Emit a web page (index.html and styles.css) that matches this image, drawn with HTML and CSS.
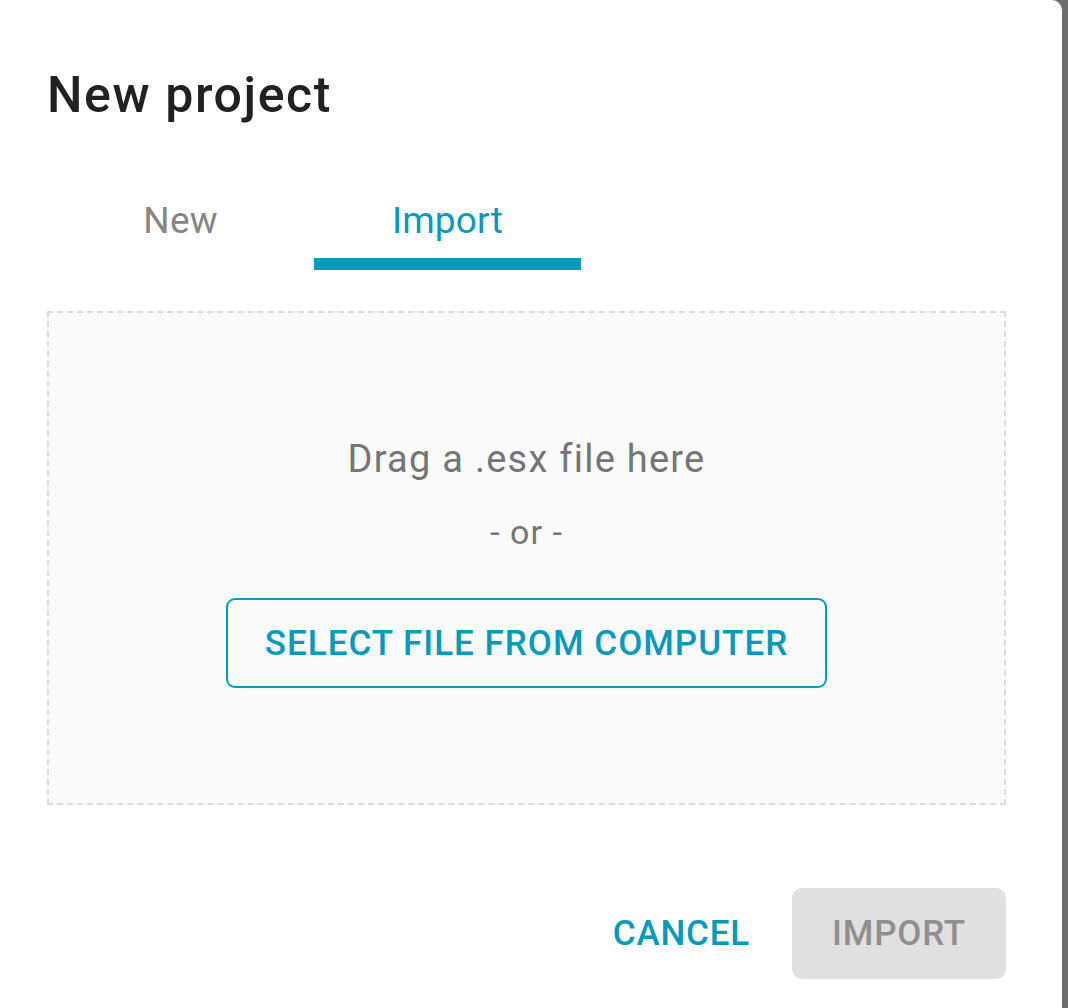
FILE: index.html
```html
<!DOCTYPE html>
<html lang="en">
<head>
<meta charset="utf-8">
<title>New project</title>
<link rel="stylesheet" href="styles.css">
</head>
<body>
<div class="dialog">
  <h1 class="title">New project</h1>
  <div class="tabs">
    <div class="tab">New</div>
    <div class="tab active">Import</div>
  </div>
  <div class="dropzone">
    <div class="drag-text">Drag a .esx file here</div>
    <div class="or-text">- or -</div>
    <button class="select-btn">SELECT FILE FROM COMPUTER</button>
  </div>
  <div class="actions">
    <button class="btn-text">CANCEL</button>
    <button class="btn-disabled" disabled>IMPORT</button>
  </div>
</div>
</body>
</html>
```

FILE: styles.css
```css
html, body {
  margin: 0;
  padding: 0;
  height: 100%;
}
body {
  background: #6e6e6e;
  font-family: Roboto, "Liberation Sans", sans-serif;
  overflow: hidden;
}
.dialog {
  background: #ffffff;
  width: 1062px;
  height: 1040px;
  box-sizing: border-box;
  border-top-right-radius: 10px;
  padding: 63px 56px 0 47px;
}
.title {
  margin: 0;
  font-size: 50px;
  line-height: 64px;
  font-weight: 500;
  color: #212121;
  letter-spacing: 1.6px;
}
.tabs {
  display: flex;
  margin-top: 43px;
}
.tab {
  width: 267px;
  height: 100px;
  box-sizing: border-box;
  display: flex;
  align-items: center;
  justify-content: center;
  font-size: 37px;
  color: #858585;
  letter-spacing: 0.2px;
}
.tab.active {
  color: #0899bb;
  border-bottom: 12px solid #0899bb;
  padding-top: 12px;
}
.dropzone {
  margin-top: 41px;
  height: 494px;
  box-sizing: border-box;
  border: 2px dashed #dcdcdc;
  background: #fafafa;
  padding-top: 122px;
  display: flex;
  flex-direction: column;
  align-items: center;
}
.drag-text {
  font-size: 38px;
  line-height: 48px;
  color: #757575;
  letter-spacing: 1.25px;
}
.or-text {
  margin-top: 25px;
  font-size: 34px;
  line-height: 48px;
  color: #757575;
  letter-spacing: 1px;
}
.select-btn {
  margin-top: 42px;
  width: 601px;
  height: 90px;
  border: 2px solid #0899bb;
  border-radius: 9px;
  background: transparent;
  color: #0899bb;
  font-family: Roboto, "Liberation Sans", sans-serif;
  font-size: 35px;
  font-weight: 500;
  letter-spacing: 1px;
  padding: 0;
}
.actions {
  margin-top: 83px;
  display: flex;
  justify-content: flex-end;
  align-items: center;
  gap: 42px;
}
.btn-text, .btn-disabled {
  font-family: Roboto, "Liberation Sans", sans-serif;
  font-size: 35px;
  font-weight: 500;
  letter-spacing: 0.8px;
  border: none;
  padding: 0;
}
.btn-text {
  background: transparent;
  color: #0899bb;
  height: 91px;
}
.btn-disabled {
  background: #e0e0e0;
  color: #8f8f8f;
  width: 214px;
  height: 91px;
  border-radius: 10px;
}
```
